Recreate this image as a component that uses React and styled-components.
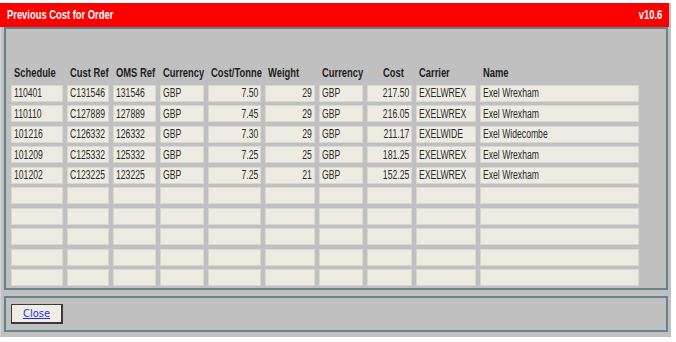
import React from 'react'
import styled, { createGlobalStyle } from 'styled-components'

const GlobalStyle = createGlobalStyle`
  body {
    margin: 0;
    background: #ffffff;
    font-family: "Liberation Sans", Arial, sans-serif;
  }
`

const columns = [
  { label: 'Schedule', width: 52 },
  { label: 'Cust Ref', width: 42 },
  { label: 'OMS Ref', width: 43 },
  { label: 'Currency', width: 44 },
  { label: 'Cost/Tonne', width: 53, num: true },
  { label: 'Weight', width: 50, num: true },
  { label: 'Currency', width: 44 },
  { label: 'Cost', width: 45, num: true, headRight: true },
  { label: 'Carrier', width: 60 },
  { label: 'Name', width: 159 },
]

const rows = [
  ['110401', 'C131546', '131546', 'GBP', '7.50', '29', 'GBP', '217.50', 'EXELWREX', 'Exel Wrexham'],
  ['110110', 'C127889', '127889', 'GBP', '7.45', '29', 'GBP', '216.05', 'EXELWREX', 'Exel Wrexham'],
  ['101216', 'C126332', '126332', 'GBP', '7.30', '29', 'GBP', '211.17', 'EXELWIDE', 'Exel Widecombe'],
  ['101209', 'C125332', '125332', 'GBP', '7.25', '25', 'GBP', '181.25', 'EXELWREX', 'Exel Wrexham'],
  ['101202', 'C123225', '123225', 'GBP', '7.25', '21', 'GBP', '152.25', 'EXELWREX', 'Exel Wrexham'],
]

const emptyRows = 5

// the screen font is much narrower than Arial, so squeeze the glyphs
const Squeeze = styled.span`
  display: inline-block;
  white-space: nowrap;
  transform: scaleX(${p => p.scale || 0.69});
  transform-origin: ${p => (p.right ? 'right' : 'left')} center;
`

const App = () => (
  <>
    <GlobalStyle />
    <Window>
      <TitleBar>
        <Squeeze scale={0.75}>Previous Cost for Order</Squeeze>
        <Squeeze scale={0.75} right>v10.6</Squeeze>
      </TitleBar>
      <Content>
        <Panel>
          <Grid>
            {columns.map((c, i) => (
              <Head key={'h' + i} right={c.headRight}>
                <Squeeze scale={0.75} right={c.headRight}>{c.label}</Squeeze>
              </Head>
            ))}
            {rows.map((r, ri) =>
              r.map((v, ci) => (
                <Cell key={ri + '-' + ci} right={columns[ci].num}>
                  <Squeeze right={columns[ci].num}>{v}</Squeeze>
                </Cell>
              ))
            )}
            {Array.from({ length: emptyRows * columns.length }).map((_, i) => (
              <Cell key={'e' + i} />
            ))}
          </Grid>
        </Panel>
        <Footer>
          <CloseButton href="#">Close</CloseButton>
        </Footer>
      </Content>
    </Window>
  </>
)

const Window = styled.div`
  margin-top: 3px;
  width: 671px;
  background: #c0c0c0;
  border-left: 1px solid #d2d6d8;
  box-sizing: border-box;
  padding-bottom: 5px;
`
const TitleBar = styled.div`
  height: 24px;
  margin-right: 2px;
  margin-left: -1px;
  background: #ff0000;
  color: #ffffff;
  display: flex;
  align-items: center;
  justify-content: space-between;
  padding: 0 7px 0 7px;
  font-weight: bold;
  font-size: 12.5px;
`
const Content = styled.div`
  padding: 0 3px 0 3px;
`
const Panel = styled.div`
  height: 263px;
  box-sizing: border-box;
  border: 2px solid #62848c;
  padding: 35px 5px 0 5px;
`
const Grid = styled.div`
  display: grid;
  grid-template-columns: ${columns.map(c => c.width + 'px').join(' ')};
  column-gap: 4px;
  row-gap: 3.5px;
  grid-auto-rows: 17px;
`
const Head = styled.div`
  font-weight: bold;
  font-size: 12.5px;
  color: #1e1e1e;
  display: flex;
  align-items: center;
  justify-content: ${p => (p.right ? 'flex-end' : 'flex-start')};
  padding: ${p => (p.right ? '0 8px 0 0' : '0 0 0 2.5px')};
`
const Cell = styled.div`
  background: #eeece2;
  border: 1px solid #dad8ce;
  box-sizing: border-box;
  font-size: 12.5px;
  color: #2a2a2a;
  display: flex;
  align-items: center;
  justify-content: ${p => (p.right ? 'flex-end' : 'flex-start')};
  padding: 0 2px;
`
const Footer = styled.div`
  margin-top: 6px;
  height: 36px;
  box-sizing: border-box;
  border: 2px solid #62848c;
  padding: 0 5px;
  display: flex;
  align-items: center;
`
const CloseButton = styled.a`
  width: 52px;
  height: 20px;
  box-sizing: border-box;
  background: #f0eee4;
  border: 1px solid #3a3a3a;
  border-right-width: 2px;
  border-bottom-width: 2px;
  display: flex;
  align-items: center;
  justify-content: center;
  color: #2a2aff;
  text-decoration: underline;
  font-family: "DejaVu Sans Condensed", "DejaVu Sans", sans-serif;
  font-size: 11px;
`

export default App
